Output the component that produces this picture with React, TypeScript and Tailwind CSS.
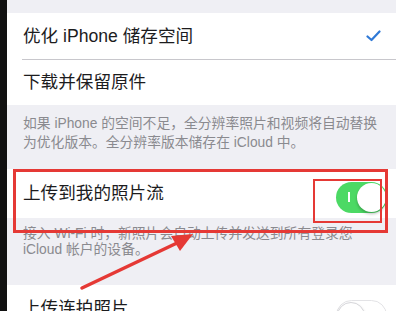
import React from 'react';

const font = { fontFamily: '"Liberation Sans", "Noto Sans CJK SC", sans-serif' };

const Toggle: React.FC<{ on: boolean }> = ({ on }) => {
  if (on) {
    return (
      <div className="relative w-[51px] h-[31px] rounded-full bg-[#4cd964] flex items-center justify-end pr-[1px]">
        {/* "I" label */}
        <span className="absolute left-[12px] top-[10px] w-[1.5px] h-[10px] bg-white" />
        <span className="w-[29px] h-[29px] rounded-full bg-white shadow-[0_2px_3px_rgba(0,0,0,0.25)]" />
      </div>
    );
  }
  return (
    <div className="relative w-[51px] h-[31px] rounded-full bg-white border-[1.5px] border-[#e3e3e6] flex items-center">
      {/* "O" label */}
      <span className="absolute right-[9px] top-[10px] w-[9px] h-[9px] rounded-full border-[1.5px] border-[#b4b4b8]" />
      <span className="w-[28px] h-[28px] rounded-full bg-white border border-[#d6d6da] shadow-[0_2px_3px_rgba(0,0,0,0.2)]" />
    </div>
  );
};

export default function App() {
  return (
    <div className="w-[396px] h-[311px] overflow-hidden flex relative bg-black" style={font}>
      <div className="w-[7px] shrink-0 bg-[#111]" />
      <div className="flex-1 bg-[#efeff4] flex flex-col">
        <div className="h-[13px] shrink-0" />

        {/* storage options */}
        <div className="bg-white shrink-0">
          <div className="h-[46px] flex items-center justify-between pl-[16px] pr-[14px] text-[17.6px] text-[#1c1c1e]">
            <span>优化 iPhone 储存空间</span>
            <svg width="15" height="12" viewBox="0 0 15 12" className="mr-[1px]">
              <path d="M1.5 6.5 L5.5 10 L13.5 1.5" fill="none" stroke="#2f79d6" strokeWidth="2.2" strokeLinecap="round" strokeLinejoin="round" />
            </svg>
          </div>
          <div className="ml-[15px] h-px bg-[#c8c7cc]" />
          <div className="h-[45px] flex items-center pl-[16px] text-[17.6px] text-[#1c1c1e]">
            <span>下载并保留原件</span>
          </div>
        </div>

        <div className="shrink-0 pl-[16px] pr-[10px] pt-[9px] h-[64px] text-[13.8px] leading-[19px] text-[#8a8a8f]">
          <div className="whitespace-nowrap">如果 iPhone 的空间不足，全分辨率照片和视频将自动替换</div>
          <div className="whitespace-nowrap">为优化版本。全分辨率版本储存在 iCloud 中。</div>
        </div>

        {/* photo stream */}
        <div className="bg-white shrink-0 h-[49px] flex items-center justify-between pl-[16px] pr-[9px] text-[17.6px] text-[#1c1c1e]">
          <span>上传到我的照片流</span>
          <div className="pt-[7px]">
            <Toggle on />
          </div>
        </div>

        <div className="shrink-0 pl-[16px] pr-[10px] pt-[8px] h-[67px] text-[13.8px] leading-[16px] text-[#8a8a8f]">
          <div className="whitespace-nowrap">接入 Wi-Fi 时，新照片会自动上传并发送到所有登录您</div>
          <div className="whitespace-nowrap">iCloud 帐户的设备。</div>
        </div>

        {/* burst */}
        <div className="bg-white shrink-0 h-[46px] flex items-center justify-between pl-[16px] pr-[9px] text-[17.6px] text-[#1c1c1e]">
          <span>上传连拍照片</span>
          <div className="pt-[15px]">
            <Toggle on={false} />
          </div>
        </div>
      </div>

      {/* annotation overlays */}
      <div className="absolute left-[13px] top-[169px] w-[375px] h-[64px] border-[3px] border-[#e53935]" />
      <div className="absolute left-[313px] top-[179px] w-[69px] h-[44px] border-[2.5px] border-[#e53935]" />
      <svg className="absolute left-0 top-0" width="396" height="311" viewBox="0 0 396 311">
        <path d="M82 288 L177 243" stroke="#e53935" strokeWidth="3.5" strokeLinecap="round" />
        <polygon points="193,234 171,236 180,251" fill="#e53935" />
      </svg>
    </div>
  );
}
